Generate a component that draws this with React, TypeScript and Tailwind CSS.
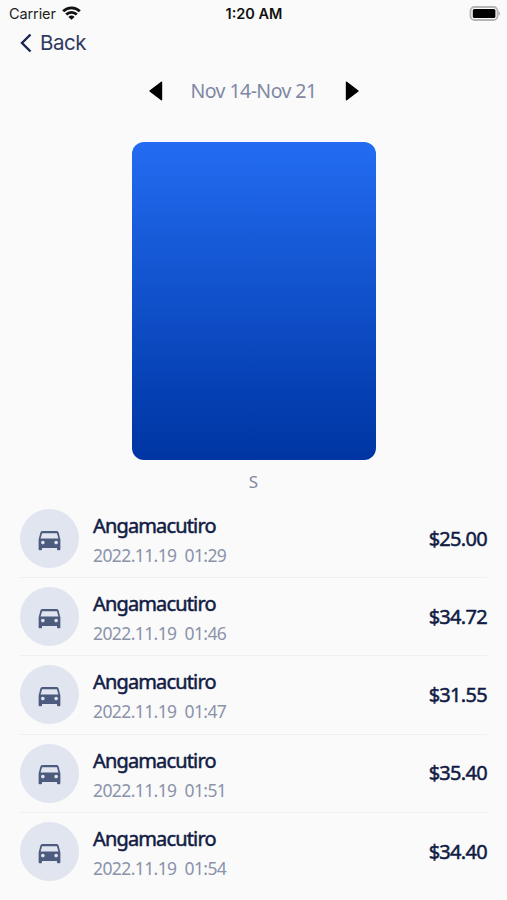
// ActivityScreen

const trips = [
  { id: 1, title: "Angamacutiro", date: "2022.11.19", time: "01:29", price: "$25.00" },
  { id: 2, title: "Angamacutiro", date: "2022.11.19", time: "01:46", price: "$34.72" },
  { id: 3, title: "Angamacutiro", date: "2022.11.19", time: "01:47", price: "$31.55" },
  { id: 4, title: "Angamacutiro", date: "2022.11.19", time: "01:51", price: "$35.40" },
  { id: 5, title: "Angamacutiro", date: "2022.11.19", time: "01:54", price: "$34.40" },
];

function WifiIcon() {
  return (
    <svg width="19" height="14" viewBox="0 0 19 14" fill="none" stroke="#111" strokeWidth="2.8" className="-mt-[2px]">
      <path d="M1.2 5.2a11.8 11.8 0 0 1 16.6 0" />
      <path d="M4.2 8.5a7.5 7.5 0 0 1 10.6 0" />
      <path d="M9.5 13.8 6.4 10.9a4.3 4.3 0 0 1 6.2 0z" fill="#111" stroke="none" />
    </svg>
  );
}

function BatteryIcon() {
  return (
    <svg width="32" height="15" viewBox="0 0 32 15" className="-mt-[2px]">
      <rect x="1.5" y="1" width="27" height="13" rx="4" fill="#fafafa" stroke="#b5b5b5" strokeWidth="1.8" />
      <rect x="3.8" y="3" width="22.6" height="9" rx="1.5" fill="#000" />
      <path d="M29.4 5c2.2.8 2.2 4.2 0 5z" fill="#b5b5b5" />
    </svg>
  );
}

function CarIcon() {
  return (
    <svg width="29" height="29" viewBox="0 0 24 24" fill="#4d5b7f" className="mt-px">
      <path d="M19.6 6.5C19.3 5.5 18.6 5 17.6 5H6.4c-1 0-1.7.5-2 1.5L3 12v8c0 .5.3.8.8.8h1.200c.5 0 .8-.3.8-.8v-1h12.400v1c0 .5.3.8.8.8h1.200c.5 0 .8-.3.8-.8v-8l-1.400-5.500zM6.5 16c-.83 0-1.500-.67-1.500-1.500S5.67 13 6.5 13s1.500.67 1.500 1.500S7.330 16 6.500 16zm11 0c-.83 0-1.500-.67-1.500-1.500s.67-1.500 1.500-1.500 1.500.67 1.500 1.500-.67 1.500-1.500 1.500zM4.600 11.200l1.300-4.300h12.200l1.300 4.300H4.600z" />
    </svg>
  );
}

export default function ActivityScreen() {
  return (
    <div className="h-[900px] w-[507px] overflow-hidden bg-[#fafafa] font-['Noto_Sans',sans-serif]">

      {/* Status bar */}
      <div className="grid h-7 grid-cols-3 items-center pl-[9px] pr-[6px] font-['Inter',sans-serif] text-[14.5px] text-[#222]">
        <div className="flex items-center gap-[6px]">
          <span className="tracking-[-0.1px]">Carrier</span>
          <WifiIcon />
        </div>
        <span className="-ml-[2px] text-center font-semibold text-[#111]">1:20 AM</span>
        <div className="flex justify-end">
          <BatteryIcon />
        </div>
      </div>

      {/* Back */}
      <button className="flex h-[30px] items-center gap-[8px] pl-[19px] font-['Inter',sans-serif] text-[20.5px] tracking-[-0.5px] text-[#2f3a5f]">
        <svg width="13" height="20" viewBox="0 0 13 20" fill="none" stroke="#1b2550" strokeWidth="2.4">
          <path d="M11.5 1.5 3 10l8.5 8.5" />
        </svg>
        Back
      </button>

      {/* Week picker */}
      <div className="mt-[18px] flex h-[30px] items-center justify-center">
        <svg width="14" height="20" viewBox="0 0 14 20">
          <path d="M12.5 1.2v17.6L1 10z" fill="#000" stroke="#000" strokeWidth="1.4" strokeLinejoin="round" />
        </svg>
        <span className="w-[182px] text-center text-[19.5px] tracking-[-0.55px] text-[#7f88a3]">
          Nov 14-Nov 21
        </span>
        <svg width="14" height="20" viewBox="0 0 14 20">
          <path d="M1.5 1.2v17.6L13 10z" fill="#000" stroke="#000" strokeWidth="1.4" strokeLinejoin="round" />
        </svg>
      </div>

      {/* Chart */}
      <div className="mx-auto mt-[36.4px] h-[318px] w-[244px] rounded-xl bg-linear-to-b from-[#236cf2] to-[#0035a3]" />
      <p className="mt-[9.6px] text-center text-[17px] leading-6 text-[#8188a0]">S</p>

      {/* Trips */}
      <ul className="mt-[6px] px-5">
        {trips.map((trip) => (
          <li
            key={trip.id}
            className="flex h-[78.2px] items-center border-b border-[#f0f0f2] last:border-b-0"
          >
            <div className="flex size-[59px] items-center justify-center rounded-full bg-[#e0e5ef]">
              <CarIcon />
            </div>
            <div className="ml-[14px] flex-1 pt-[4px]">
              <h3 className="text-[20px] leading-7 tracking-[-0.85px] text-[#111c44] [-webkit-text-stroke:0.5px_#111c44]">
                {trip.title}
              </h3>
              <p className="mt-px flex gap-2 text-[17.5px] leading-7 tracking-[-0.6px] text-[#8b93aa]">
                <span>{trip.date}</span>
                <span>{trip.time}</span>
              </p>
            </div>
            <span className="text-[20px] tracking-[-0.7px] text-[#111c44] [-webkit-text-stroke:0.5px_#111c44]">
              {trip.price}
            </span>
          </li>
        ))}
      </ul>

    </div>
  );
}
